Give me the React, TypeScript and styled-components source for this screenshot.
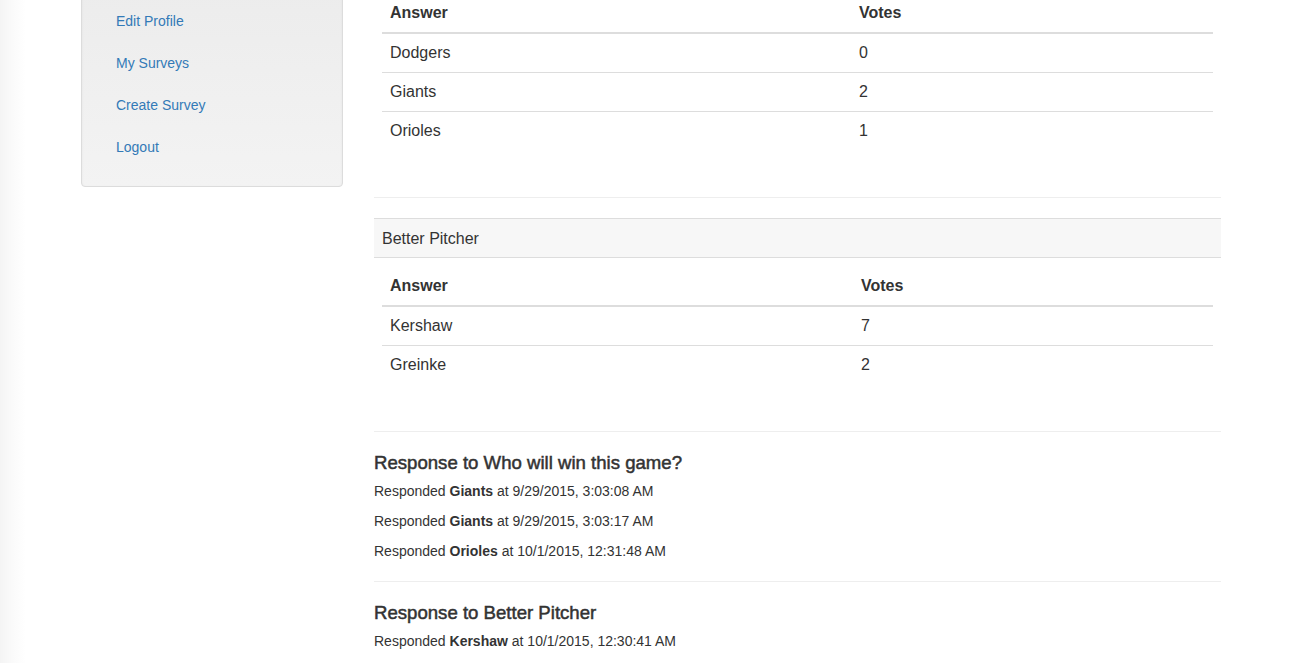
import React from "react";
import styled, { createGlobalStyle } from "styled-components";

const Global = createGlobalStyle`
  html, body { margin: 0; padding: 0; }
  body {
    font-family: "Liberation Sans", Arial, sans-serif;
    font-size: 14px;
    line-height: 1.42857;
    color: #333;
    background: linear-gradient(to right, #f4f4f4 0, #fafafa 12px, #fff 26px) fixed;
    min-height: 100vh;
  }
  * { box-sizing: border-box; }
`;

const Page = styled.div`
  margin-top: -55px;
  padding-left: 81px;
  width: 1221px;
  display: flex;
  align-items: flex-start;
  gap: 31px;
`;

const Sidebar = styled.aside`
  width: 262px;
  flex: none;
  margin-top: 36px;
`;

const Well = styled.div`
  padding: 19px;
  border: 1px solid #dcdcdc;
  border-radius: 4px;
  background-color: #f2f2f2;
  background-image: linear-gradient(to bottom, #ececec 0, #f3f3f3 100%);
  box-shadow: inset 0 1px 3px rgba(0, 0, 0, 0.05), 0 1px 0 rgba(255, 255, 255, 0.1);
`;

const Nav = styled.ul`
  list-style: none;
  margin: 0;
  padding: 0;
  display: flex;
  flex-direction: column;
  gap: 2px;
`;

const NavLink = styled.a`
  display: block;
  padding: 10px 15px;
  color: #337ab7;
  text-decoration: none;
  font-size: 14px;
  line-height: 20px;
`;

const Main = styled.main`
  flex: 1;
  min-width: 0;
`;

const Panel = styled.section`
  background: #fff;
`;

const PanelHeading = styled.div`
  padding: 9px 8px 7px;
  background: #f7f7f7;
  border-top: 1px solid #ddd;
  border-bottom: 1px solid #ddd;
  font-size: 16px;
  line-height: 22px;
`;

const PanelBody = styled.div`
  padding: 9px 8px 8px;
`;

const Table = styled.table`
  width: 100%;
  border-collapse: collapse;
  border-spacing: 0;
  margin-bottom: 19px;
  font-size: 16px;
  line-height: 22px;
`;

const Th = styled.th<{ $w?: number }>`
  text-align: left;
  font-weight: bold;
  padding: 8px;
  border-bottom: 2px solid #ddd;
  vertical-align: bottom;
  ${(p) => (p.$w ? `width: ${p.$w}px;` : "")}
`;

const Td = styled.td`
  padding: 8px;
  border-top: 1px solid #ddd;
  vertical-align: top;
`;

const FirstTd = styled(Td)`
  border-top: 0;
`;

const Rule = styled.hr`
  margin: 20px 0;
  border: 0;
  border-top: 1px solid #eee;
  height: 0;
`;

const ResponseTitle = styled.h4`
  margin: 0 0 8px;
  padding-top: 1px;
  font-size: 18.6px;
  font-weight: normal;
  -webkit-text-stroke: 0.5px #333;
  line-height: 20px;
`;

const ResponseLine = styled.p`
  margin: 0 0 10px;
  font-size: 14px;
  line-height: 20px;
`;

type Survey = { title: string; col: number; answers: [string, number][] };

const surveys: Survey[] = [
  {
    title: "Who will win this game?",
    col: 469,
    answers: [
      ["Dodgers", 0],
      ["Giants", 2],
      ["Orioles", 1],
    ],
  },
  {
    title: "Better Pitcher",
    col: 471,
    answers: [
      ["Kershaw", 7],
      ["Greinke", 2],
    ],
  },
];

const responses: { title: string; items: [string, string][] }[] = [
  {
    title: "Who will win this game?",
    items: [
      ["Giants", "9/29/2015, 3:03:08 AM"],
      ["Giants", "9/29/2015, 3:03:17 AM"],
      ["Orioles", "10/1/2015, 12:31:48 AM"],
    ],
  },
  {
    title: "Better Pitcher",
    items: [["Kershaw", "10/1/2015, 12:30:41 AM"]],
  },
];

export default function App() {
  return (
    <>
      <Global />
      <Page>
        <Sidebar>
          <Well>
            <Nav>
              {["Edit Profile", "My Surveys", "Create Survey", "Logout"].map((l) => (
                <li key={l}>
                  <NavLink href="#">{l}</NavLink>
                </li>
              ))}
            </Nav>
          </Well>
        </Sidebar>
        <Main>
          {surveys.map((s) => (
            <React.Fragment key={s.title}>
              <Panel>
                <PanelHeading>{s.title}</PanelHeading>
                <PanelBody>
                  <Table>
                    <thead>
                      <tr>
                        <Th $w={s.col}>Answer</Th>
                        <Th>Votes</Th>
                      </tr>
                    </thead>
                    <tbody>
                      {s.answers.map(([a, v], i) => {
                        const C = i === 0 ? FirstTd : Td;
                        return (
                          <tr key={a}>
                            <C>{a}</C>
                            <C>{v}</C>
                          </tr>
                        );
                      })}
                    </tbody>
                  </Table>
                </PanelBody>
              </Panel>
              <Rule />
            </React.Fragment>
          ))}
          {responses.map((r, idx) => (
            <React.Fragment key={r.title}>
              {idx > 0 && <Rule />}
              <ResponseTitle>Response to {r.title}</ResponseTitle>
              {r.items.map(([a, t], i) => (
                <ResponseLine key={i}>
                  Responded <b>{a}</b> at {t}
                </ResponseLine>
              ))}
            </React.Fragment>
          ))}
        </Main>
      </Page>
    </>
  );
}
